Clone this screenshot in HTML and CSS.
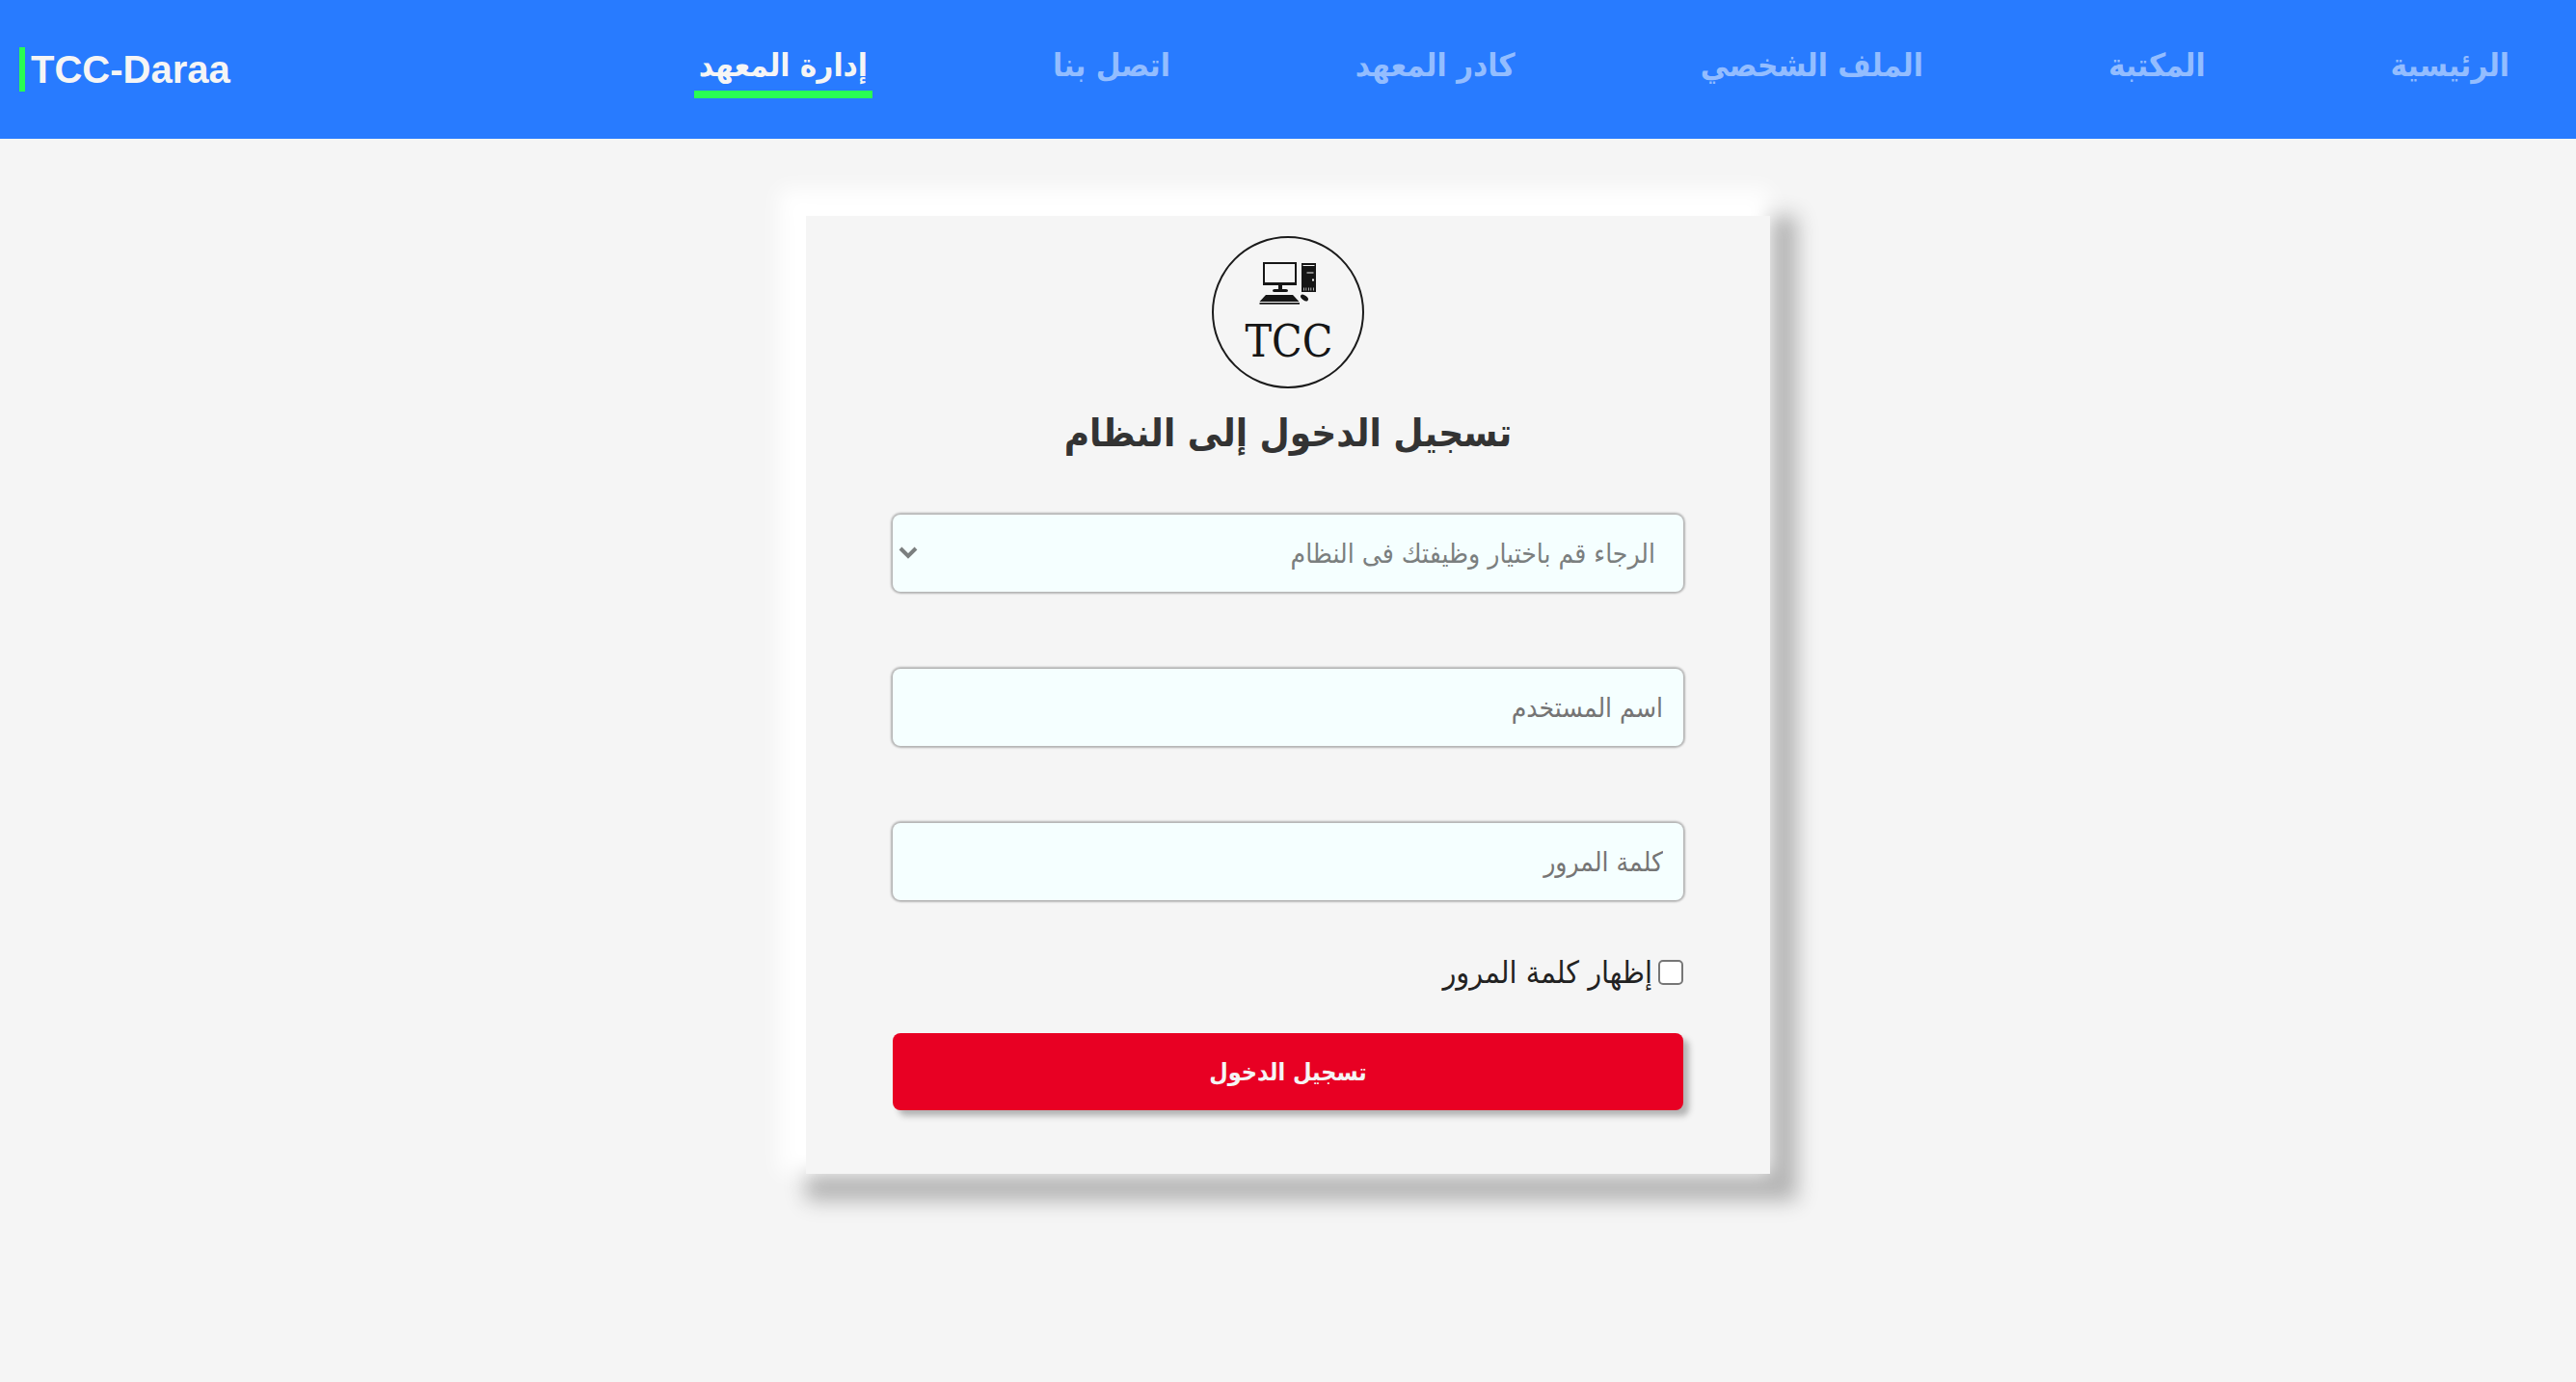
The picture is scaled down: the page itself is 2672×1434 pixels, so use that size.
FILE: index.html
```html
<!DOCTYPE html>
<html lang="ar" dir="rtl">
<head>
  <meta charset="utf-8">
  <meta name="viewport" content="width=device-width, initial-scale=1">
  <title>TCC-Daraa</title>
  <link rel="stylesheet" href="styles.css">
</head>
<body>
  <header class="site-header">
    <nav class="nav">
      <a class="nav-link" href="#">الرئيسية</a>
      <a class="nav-link" href="#">المكتبة</a>
      <a class="nav-link" href="#">الملف الشخصي</a>
      <a class="nav-link" href="#">كادر المعهد</a>
      <a class="nav-link" href="#">اتصل بنا</a>
      <a class="nav-link nav-link-active" href="#" aria-current="page">إدارة المعهد</a>
    </nav>
    <a class="brand" href="#" dir="ltr">TCC-Daraa</a>
  </header>

  <main class="page">
    <form class="card">
      <svg class="logo" viewBox="0 0 160 160" role="img" aria-label="TCC">
        <circle cx="80" cy="80" r="78" fill="none" stroke="#1b1b1b" stroke-width="2"/>
        <g fill="#161616">
          <path fill-rule="evenodd" d="M54 28h35v24H54zM56 30v19h31V30z"/>
          <path d="M70 52h4v4h4q2 0 2 1.500t-2 1.500H66q-2 0-2-1.500t2-1.500h4z"/>
          <path fill-rule="evenodd" d="M94 29h15v30H94zM95.500 31v1h12v-1zM99.500 38.500v1h7v-1zM105 45.500v2h2v-2zM96 54.500v3h.7v-3zM98.500 54.500v3h.7v-3zM101 54.500v3h.7v-3zM103.500 54.500v3h.7v-3zM106 54.500v3h.7v-3z"/>
          <path d="M57 62h28l6.500 7H50.500z"/>
          <path d="M50.500 70h41.500v1.700H50.500z"/>
          <ellipse cx="97" cy="65" rx="4.500" ry="2.500" transform="rotate(36 97 65)"/>
        </g>
        <text class="logo-text" x="81" y="126" text-anchor="middle">TCC</text>
      </svg>

      <h1 class="title">تسجيل الدخول إلى النظام</h1>

      <div class="fields">
        <div class="select-wrap">
          <select class="field field-select" aria-label="الوظيفة">
            <option>الرجاء قم باختيار وظيفتك فى النظام</option>
          </select>
          <svg class="chevron" viewBox="0 0 20 14" aria-hidden="true">
            <path d="M2 2l8 8 8-8" fill="none" stroke="#7b7f7f" stroke-width="4"/>
          </svg>
        </div>
        <input class="field" type="text" placeholder="اسم المستخدم" aria-label="اسم المستخدم">
        <input class="field" type="password" placeholder="كلمة المرور" aria-label="كلمة المرور">
      </div>

      <div class="show-password">
        <input class="checkbox" type="checkbox" id="show-password">
        <label for="show-password">إظهار كلمة المرور</label>
      </div>

      <button class="submit" type="submit">تسجيل الدخول</button>
    </form>
  </main>
</body>
</html>
```

FILE: styles.css
```css
* {
  box-sizing: border-box;
}

body {
  margin: 0;
  min-height: 100vh;
  background: #f5f5f5;
  color: #222;
  font-family: "DejaVu Sans Condensed", "DejaVu Sans", sans-serif;
}

.site-header {
  display: flex;
  align-items: center;
  justify-content: space-between;
  min-height: 144px;
  padding: 0 64px 0 20px;
  background: #287bff;
}

.nav {
  display: flex;
  align-items: center;
  gap: 182px;
}

.nav-link {
  padding: 0 5px;
  border-bottom: 8px solid transparent;
  color: #93bdff;
  font-size: 33px;
  font-weight: 700;
  line-height: 52px;
  text-decoration: none;
  white-space: nowrap;
}

.nav-link-active {
  border-color: #29fd53;
  color: #f5f5f5;
}

.brand {
  padding-left: 6px;
  border-left: 6px solid #29fd53;
  color: #f5f5f5;
  font-family: "Liberation Sans", Arial, sans-serif;
  font-size: 40px;
  font-weight: 700;
  line-height: 46px;
  text-decoration: none;
}

.page {
  display: flex;
  justify-content: center;
  padding: 80px 40px;
}

.card {
  display: flex;
  flex-direction: column;
  width: 100%;
  max-width: 1000px;
  padding: 20px 90px 66px;
  background: #f5f5f5;
  box-shadow:
    -14px -14px 20px 14px #fff,
    14px 14px 20px 14px #b4b4b4;
}

.logo {
  align-self: center;
  width: 160px;
  height: 160px;
}

.logo-text {
  fill: #161616;
  font-family: "DejaVu Serif Condensed", "DejaVu Serif", serif;
  font-size: 46px;
}

.title {
  margin: 16px 0 56px;
  color: #333;
  font-size: 40px;
  font-weight: 700;
  line-height: 58px;
  text-align: center;
}

.fields {
  display: grid;
  gap: 80px;
}

.select-wrap {
  position: relative;
}

.field {
  display: block;
  width: 100%;
  height: 80px;
  padding: 0 21px;
  border: 0;
  border-radius: 8px;
  outline: 0;
  background: #f5ffff;
  box-shadow: 0 0 2px 2px #b4b4b4;
  color: #757575;
  font-family: inherit;
  font-size: 28px;
}

.field::placeholder {
  color: #757575;
  opacity: 1;
}

.field-select {
  padding: 0 29px;
  appearance: none;
  color: #7b7f7f;
}

.chevron {
  position: absolute;
  top: 33px;
  left: 6px;
  width: 20px;
  height: 14px;
  pointer-events: none;
}

.show-password {
  display: flex;
  align-items: center;
  gap: 6px;
  margin: 50px 0 38px;
  font-size: 32px;
  line-height: 50px;
}

.checkbox {
  width: 26px;
  height: 26px;
  margin: 0;
  border: 2px solid #767676;
  border-radius: 5px;
  appearance: none;
  background: #fff;
}

.checkbox:checked {
  background: #287bff;
}

.submit {
  height: 80px;
  border: 0;
  border-radius: 8px;
  background: #e80023;
  box-shadow: 6px 6px 6px #b4b4b4;
  color: #f5f5f5;
  font-family: inherit;
  font-size: 25px;
  font-weight: 700;
}
```
